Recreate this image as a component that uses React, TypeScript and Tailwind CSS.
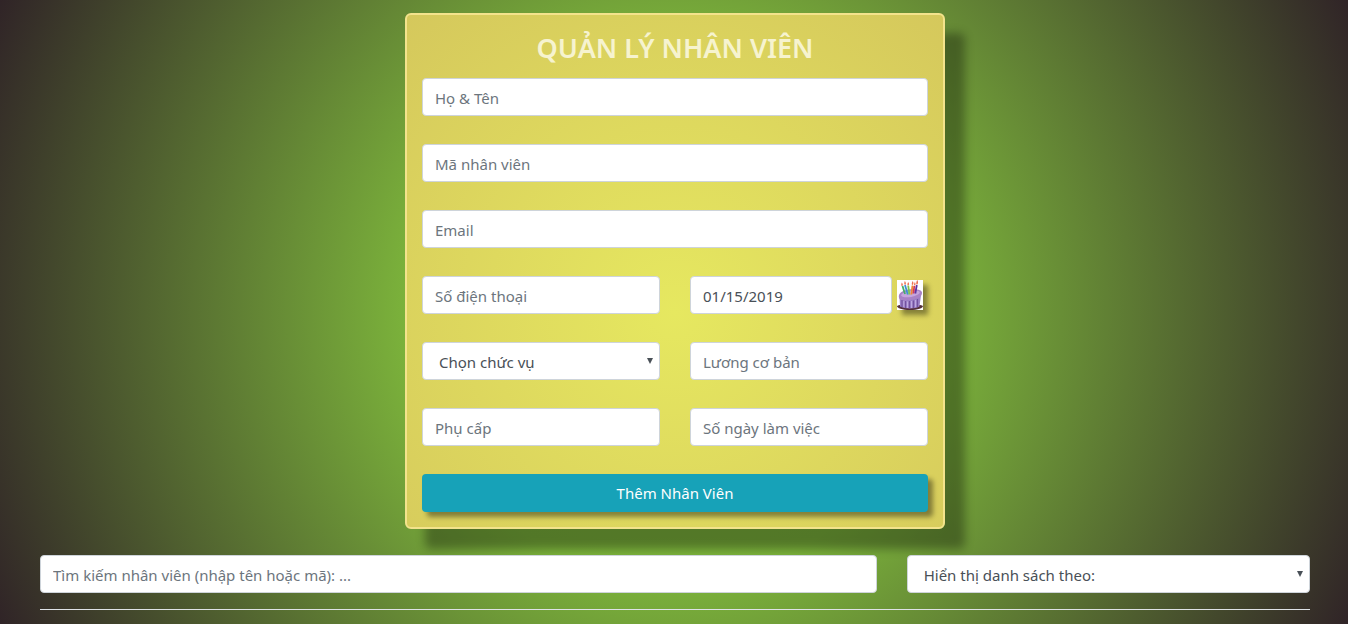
import type { InputHTMLAttributes, SelectHTMLAttributes } from "react";

const control =
  "block h-[38px] w-full min-w-0 rounded border border-[#ced4da] bg-white pt-[2px] text-[#495057] outline-none placeholder:text-[#6c757d]";

type FieldProps = InputHTMLAttributes<HTMLInputElement> & { label: string };

function Field({ label, ...rest }: FieldProps) {
  return <input type="text" aria-label={label} className={`${control} px-3`} {...rest} />;
}

type PickerProps = SelectHTMLAttributes<HTMLSelectElement> & {
  label: string;
  options: string[];
};

function Picker({ label, options, ...rest }: PickerProps) {
  return (
    <div className="relative min-w-0">
      <select aria-label={label} className={`${control} appearance-none pr-6 pl-4`} {...rest}>
        {options.map((option) => (
          <option key={option}>{option}</option>
        ))}
      </select>
      <svg
        viewBox="0 0 6 6"
        className="pointer-events-none absolute top-4 right-[7px] h-[6px] w-[6px] fill-[#495057]"
        aria-hidden="true"
      >
        <path d="M0 0h6L3 6z" />
      </svg>
    </div>
  );
}

function BirthdayCake() {
  return (
    <svg
      viewBox="0 0 26 30"
      className="h-[30px] w-[26px] shrink-0 bg-white shadow-[5px_5px_5px_rgba(0,0,0,0.4)]"
      aria-hidden="true"
    >
      <path d="M0 26c2-2 24-2 26 0 0 2-5 4-13 4S0 28 0 26z" fill="#55303a" />
      <path d="M2.500 17 3 26.500c4 2.500 16 2.500 19.500 0L24 15z" fill="#9b80c6" />
      <path
        d="M5 20v7M8.500 21v7M12.500 21v7.500M16.500 20.500V28M20.500 19v8"
        stroke="#7352a0"
        strokeWidth="1.200"
      />
      <path
        d="M6.800 21v6M10.500 21.500V28M14.500 21v7M18.500 20v7"
        stroke="#bda8e0"
        strokeWidth="1"
      />
      <path
        d="M1.800 16.500C1.800 12.500 7 10 14 9.300c6.500-.6 10.800.7 11 3.200.2 2-1 3.500-2.500 5-1 1-2 .3-3.500 1.300s-3 .3-4.500 1-3.200-.1-5 .5-3-.4-4.500-.2c-2 .2-3.200-1.600-3.200-3.600z"
        fill="#a982c6"
      />
      <ellipse cx="13.500" cy="13.800" rx="9.500" ry="3.200" transform="rotate(-10 13.500 13.800)" fill="#c6a6dd" />
      <g strokeWidth="1.800">
        <path d="m5.500 6 2.500 8" stroke="#45b06a" />
        <path d="m8 5 2.800 9.500" stroke="#3f8fd6" />
        <path d="m11.200 5.500 1.200 9" stroke="#7fc44e" />
        <path d="m15.500 5.500-1.200 9" stroke="#ee8a35" />
        <path d="m17.300 6-.9 7.500" stroke="#d83a55" />
        <path d="m19.800 5-1.500 8.500" stroke="#5f35a0" />
      </g>
      <g fill="#ee6f50">
        <path d="M4.800 2.500c1.500 1.500 1.200 3.200.4 3.400C4 6.100 4 4.500 4.800 2.500zM7.800 1c1.600 1.700 1.200 3.700.4 3.800C7 4.800 7 3 7.800 1zM11.200 2c1.300 1.600 1 3.200 0 3.300-1.200 0-1-1.500 0-3.300zM15.700 1c1.200 1.700.8 3.900-.3 3.900-1.200-.2-.6-2.200.3-3.900zM17.900 2c1 1.500.8 3.500-.3 3.600-1-.2-.6-2 .3-3.600zM20.300 0c1.200 2 .8 4.500-.3 4.500-1.300-.3-.7-3 .3-4.500z" />
      </g>
    </svg>
  );
}

export default function App() {
  return (
    <main className="min-h-screen bg-[radial-gradient(circle,#84bd3e_0%,#7bb23b_36%,#302427_100%)] pt-[13px] pr-[38px] pb-[14px] pl-10 font-['Noto_Sans','Open_Sans',sans-serif] text-[15px] leading-6">
      <form
        className="mx-auto max-w-[540px] rounded-md border-2 border-[#f3e38c] bg-[radial-gradient(circle_at_50%_58%,#e6e860_0%,#d5c85c_100%)] px-[15px] pb-[15px] shadow-[20px_20px_10px_rgba(0,0,0,0.33)]"
        onSubmit={(event) => event.preventDefault()}
      >
        <h1 className="pt-4 pb-[14px] text-center text-[27px] leading-[33px] font-semibold text-[#f6f3cf]">
          QUẢN LÝ NHÂN VIÊN
        </h1>
        <div className="grid grid-cols-2 gap-x-[30px] gap-y-7">
          <div className="col-span-2">
            <Field label="Họ & Tên" placeholder="Họ & Tên" />
          </div>
          <div className="col-span-2">
            <Field label="Mã nhân viên" placeholder="Mã nhân viên" />
          </div>
          <div className="col-span-2">
            <Field label="Email" placeholder="Email" type="email" />
          </div>
          <Field label="Số điện thoại" placeholder="Số điện thoại" type="tel" />
          <div className="flex items-center gap-[5px] pr-[5px]">
            <Field label="Ngày sinh" defaultValue="01/15/2019" />
            <BirthdayCake />
          </div>
          <Picker label="Chức vụ" options={["Chọn chức vụ"]} />
          <Field label="Lương cơ bản" placeholder="Lương cơ bản" />
          <Field label="Phụ cấp" placeholder="Phụ cấp" />
          <Field label="Số ngày làm việc" placeholder="Số ngày làm việc" />
          <button
            type="submit"
            className="col-span-2 h-[38px] rounded bg-[#17a2b8] text-white shadow-[5px_5px_5px_rgba(0,0,0,0.4)]"
          >
            Thêm Nhân Viên
          </button>
        </div>
      </form>

      <section className="mt-[26px] grid grid-cols-[836fr_403fr] gap-[30px]">
        <Field
          label="Tìm kiếm nhân viên"
          placeholder="Tìm kiếm nhân viên (nhập tên hoặc mã): ..."
          type="search"
        />
        <Picker label="Hiển thị danh sách" options={["Hiển thị danh sách theo:"]} />
      </section>
      <hr className="mt-4 border-[#dee2e6]" />
    </main>
  );
}
